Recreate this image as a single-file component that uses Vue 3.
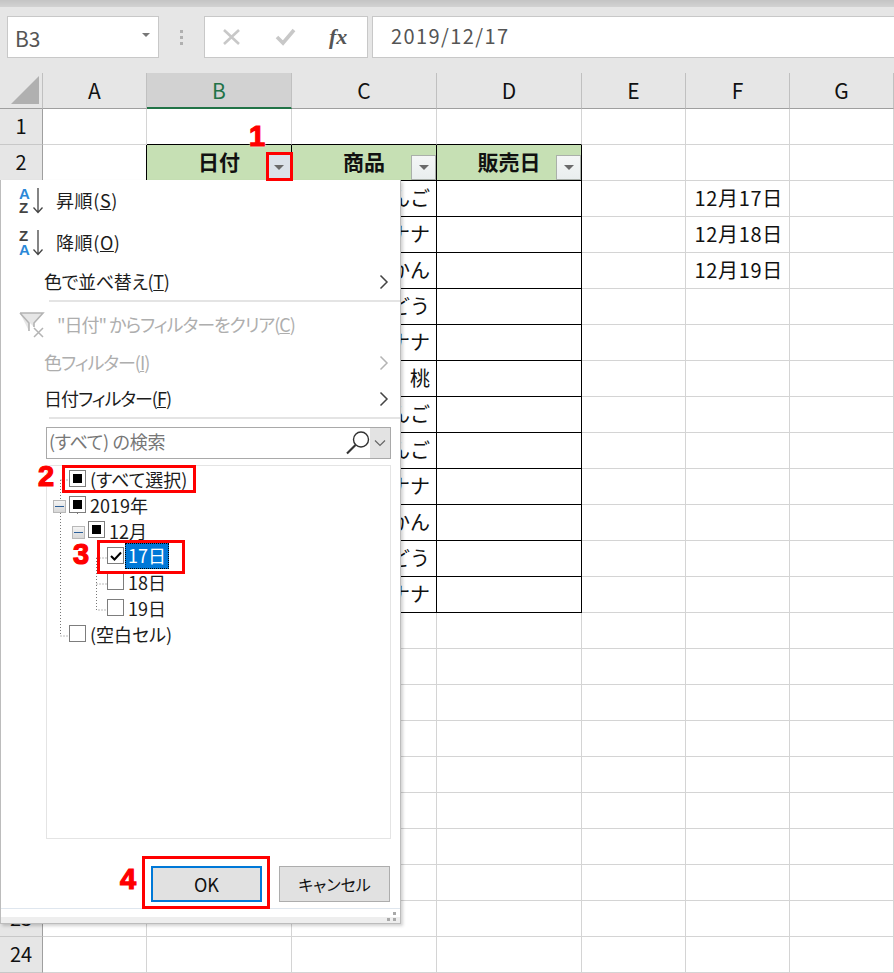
<script setup>
const columns = ['A', 'B', 'C', 'D', 'E', 'F', 'G']
const rows = Array.from({ length: 24 }, (_, i) => i + 1)
const goods = ['りんご', 'バナナ', 'みかん', 'ぶどう', 'バナナ', '桃', 'りんご', 'りんご', 'バナナ', 'みかん', 'ぶどう', 'バナナ']
const heads = { B: '日付', C: '商品', D: '販売日' }
const dates = { 3: '12月17日', 4: '12月18日', 5: '12月19日' }
const inTable = (r, c) => r >= 2 && r <= 14 && 'BCD'.includes(c)
function cellClass(r, c) {
  return {
    black: inTable(r, c),
    'black-r': c === 'A' && r >= 2 && r <= 14,
    'black-b': r === 1 && 'BCD'.includes(c),
    head: r === 2 && 'BCD'.includes(c),
    date: c === 'F',
  }
}
function cellText(r, c) {
  if (c === 'C' && r >= 3 && r <= 14) return goods[r - 3]
  if (c === 'F') return dates[r] || ''
  return ''
}
const tree = [
  { label: '(すべて選択)', level: 0, state: 'mixed' },
  { label: '2019年', level: 0, state: 'mixed', toggle: true },
  { label: '12月', level: 1, state: 'mixed', toggle: true },
  { label: '17日', level: 2, state: 'checked', selected: true },
  { label: '18日', level: 2, state: '' },
  { label: '19日', level: 2, state: '' },
  { label: '(空白セル)', level: 0, state: '' },
]
</script>

<template>
  <div class="app">
    <div class="topbar"></div>
    <div class="formula">
      <div class="namebox"><span>B3</span><i class="tri"></i></div>
      <div class="grip-v"><b></b><b></b><b></b></div>
      <div class="fxbox">
        <svg width="19" height="18" viewBox="0 0 19 18"><path d="M2 2 17 16M17 2 2 16" stroke="#c8c8c8" stroke-width="2.6" fill="none" /></svg>
        <svg width="21" height="18" viewBox="0 0 21 18"><path d="M2 9 8 15 19 2" stroke="#c8c8c8" stroke-width="3.6" fill="none" /></svg>
        <span class="fx">fx</span>
      </div>
      <div class="fbar"><span>2019/12/17</span></div>
    </div>

    <div class="sheet">
      <div class="corner"><i></i></div>
      <div v-for="c in columns" :key="c" class="colhead" :class="{ active: c === 'B' }">{{ c }}</div>
      <template v-for="r in rows" :key="r">
        <div class="rowhead">{{ r }}</div>
        <div v-for="c in columns" :key="c" class="cell" :class="cellClass(r, c)">
          <template v-if="r === 2 && heads[c]">
            <span class="headtxt">{{ heads[c] }}</span>
            <span class="fbtn" :class="{ hot: c === 'B' }"><i></i></span>
          </template>
          <template v-else>{{ cellText(r, c) }}</template>
        </div>
      </template>
    </div>

    <div class="popup">
      <div class="item sort">
        <svg class="sorticon" width="26" height="28" viewBox="0 0 26 28">
          <text x="1" y="12" class="ic blue">A</text><text x="1" y="26" class="ic dark">Z</text>
          <path d="M20 1V25M15.500 20.500 20 25.500 24.500 20.500" stroke="#444" stroke-width="1.300" fill="none" />
        </svg>
        <span class="txt wide">昇順(<u>S</u>)</span>
      </div>
      <div class="item sort">
        <svg class="sorticon" width="26" height="28" viewBox="0 0 26 28">
          <text x="1" y="12" class="ic dark">Z</text><text x="1" y="26" class="ic blue">A</text>
          <path d="M20 1V25M15.500 20.500 20 25.500 24.500 20.500" stroke="#444" stroke-width="1.300" fill="none" />
        </svg>
        <span class="txt wide">降順(<u>O</u>)</span>
      </div>
      <div class="item plain">
        <span class="txt snug">色で並べ替え(<u>T</u>)</span>
        <svg class="chev" width="10" height="16" viewBox="0 0 10 16"><path d="M1.500 1.500 8 8 1.500 14.500" stroke="#444" stroke-width="1.500" fill="none" /></svg>
      </div>
      <div class="sep"></div>
      <div class="item clear off">
        <svg class="funnel" width="26" height="26" viewBox="0 0 26 26">
          <path d="M1 1H24L15 11V15M10 19V11L1 1" stroke="#b4b4b4" stroke-width="1.600" fill="#e6e6e6" />
          <path d="M15 16 24 25M24 16 15 25" stroke="#b4b4b4" stroke-width="1.500" />
        </svg>
        <span class="txt tight">"日付" からフィルターをクリア(<u>C</u>)</span>
      </div>
      <div class="item plain off">
        <span class="txt tight">色フィルター(<u>I</u>)</span>
        <svg class="chev" width="10" height="16" viewBox="0 0 10 16"><path d="M1.500 1.500 8 8 1.500 14.500" stroke="#b4b4b4" stroke-width="1.500" fill="none" /></svg>
      </div>
      <div class="item plain">
        <span class="txt tight">日付フィルター(<u>F</u>)</span>
        <svg class="chev" width="10" height="16" viewBox="0 0 10 16"><path d="M1.500 1.500 8 8 1.500 14.500" stroke="#444" stroke-width="1.500" fill="none" /></svg>
      </div>
      <div class="sep"></div>

      <div class="search">
        <span class="ph">(すべて) の検索</span>
        <svg class="lens" width="26" height="26" viewBox="0 0 26 26">
          <circle cx="16" cy="9.500" r="7.500" stroke="#333" stroke-width="1.400" fill="none" />
          <path d="M10.500 15 2 23.500" stroke="#333" stroke-width="2.200" />
        </svg>
        <span class="drop">
          <svg width="12" height="8" viewBox="0 0 12 8"><path d="M1 1.500 6 6.500 11 1.500" stroke="#666" stroke-width="1.200" fill="none" /></svg>
        </span>
      </div>

      <div class="tree">
        <svg class="lines" width="140" height="190" viewBox="0 0 140 190">
          <path d="M13.500 14V170H24M13.500 14H24M30.500 38V50M49.500 92V144H60M49.500 92H60M49.500 118H60" stroke="#777" stroke-dasharray="1 2" fill="none" />
        </svg>
        <div v-for="n in tree" :key="n.label" class="node" :class="'lv' + n.level">
          <span v-if="n.toggle" class="toggle"><i></i></span>
          <span class="box" :class="n.state">
            <svg v-if="n.state === 'checked'" width="12" height="10" viewBox="0 0 12 10"><path d="M1 5 4.500 8.500 11 1.500" stroke="#000" stroke-width="2" fill="none" /></svg>
          </span>
          <span class="lab" :class="{ sel: n.selected }">{{ n.label }}</span>
        </div>
      </div>

      <div class="actions">
        <button class="btn primary">OK</button>
        <button class="btn">キャンセル</button>
      </div>
      <div class="foot">
        <div class="gripdots"><b></b><b></b><b></b></div>
      </div>
    </div>

    <div class="mark m1"></div>
    <div class="mark m2"></div>
    <div class="mark m3"></div>
    <div class="mark m4"></div>
    <span class="num n1">1</span>
    <span class="num n2">2</span>
    <span class="num n3">3</span>
    <span class="num n4">4</span>
  </div>
</template>

<style scoped>
.app {
  position: relative;
  width: 894px;
  height: 973px;
  overflow: hidden;
  background: #fff;
  font-family: "Noto Sans CJK JP", "Noto Sans", sans-serif;
  font-feature-settings: "palt";
  color: #111;
}
.topbar { height: 7px; background: linear-gradient(#c4c4c4, #d2d2d2); }
.formula {
  height: 66px;
  background: #e6e6e6;
  display: flex;
  align-items: flex-start;
  padding: 9px 0 0 7px;
  box-sizing: border-box;
}
.namebox, .fxbox, .fbar {
  height: 42px;
  box-sizing: border-box;
  background: #fff;
  border: 1px solid #c8c8c8;
  display: flex;
  align-items: center;
}
.namebox {
  width: 152px;
  padding: 2px 8px 0 7px;
  justify-content: space-between;
  font-size: 21px;
  color: #555;
}
.tri { width: 0; height: 0; border: 4px solid transparent; border-top: 4px solid #777; margin-top: -2px; }
.grip-v { width: 45px; height: 42px; display: flex; flex-direction: column; align-items: center; justify-content: center; gap: 3px; }
.grip-v b { width: 3px; height: 3px; background: #b0b0b0; }
.fxbox { width: 164px; padding-left: 17px; gap: 34px; }
.fx { font: italic bold 22px "Liberation Serif", serif; color: #555; margin-left: -1px; }
.fbar {
  margin-left: 4px;
  flex: 1;
  border-right: 0;
  padding: 0 0 3px 18px;
  font-size: 20px;
  letter-spacing: 1.400px;
  color: #555;
}
.sheet {
  display: grid;
  grid-template-columns: 43px 104px 145px 145px 145px 104px 104px 104px;
  grid-template-rows: 36px repeat(24, 36px);
}
.corner, .colhead, .rowhead { background: #e6e6e6; box-sizing: border-box; }
.corner { border-bottom: 1px solid #9f9f9f; border-right: 1px solid #c0c0c0; position: relative; }
.corner i {
  position: absolute;
  right: 3px;
  bottom: 4px;
  width: 28px;
  height: 28px;
  background: #b0b0b0;
  clip-path: polygon(100% 0, 100% 100%, 0 100%);
}
.colhead {
  border-bottom: 1px solid #9f9f9f;
  border-right: 1px solid #c0c0c0;
  text-align: center;
  font-size: 21px;
  line-height: 34px;
}
.colhead.active { background: #d2d2d2; border-bottom: 2px solid #217346; color: #217346; }
.rowhead {
  border-right: 1px solid #9f9f9f;
  border-bottom: 1px solid #c8c8c8;
  text-align: center;
  font-size: 20px;
  line-height: 34px;
}
.cell {
  position: relative;
  box-sizing: border-box;
  border-right: 1px solid #d4d4d4;
  border-bottom: 1px solid #d4d4d4;
  text-align: right;
  padding-right: 6px;
  font-size: 20px;
  line-height: 33px;
  font-feature-settings: normal;
}
.date { letter-spacing: 0.700px; }
.black { border-right-color: #000; border-bottom-color: #000; }
.black-r { border-right-color: #000; }
.black-b { border-bottom-color: #000; }
.head { background: #c6e0b4; padding-right: 0; text-align: center; }
.headtxt { font-weight: 700; font-size: 21px; }
.fbtn {
  position: absolute;
  right: 0;
  bottom: 0;
  width: 25px;
  height: 25px;
  box-sizing: border-box;
  background: linear-gradient(#f4f6f6, #e9eeee);
  border: 1px solid #aab0aa;
  display: flex;
  align-items: center;
  justify-content: center;
}
.fbtn.hot { background: #dbe2ea; border-color: transparent; }
.fbtn i { width: 0; height: 0; border: 5px solid transparent; border-top: 5px solid #6a6a6a; border-bottom: 0; }

.popup {
  position: absolute;
  left: 0;
  top: 180px;
  width: 401px;
  height: 744px;
  box-sizing: border-box;
  background: #fff;
  border: 1px solid #bcbcbc;
  border-top: 0;
  box-shadow: 2px 2px 3px rgba(0, 0, 0, 0.18);
  display: flex;
  flex-direction: column;
  font-size: 18px;
  color: #1c1c1c;
}
.item { display: flex; align-items: center; flex: none; }
.txt { position: relative; top: -1px; }
.wide { letter-spacing: 0.600px; }
.snug { letter-spacing: -0.300px; }
.tight { letter-spacing: -1px; }
.sort { height: 42px; padding-left: 17px; gap: 12px; }
.sorticon { overflow: visible; }
.plain { height: 36px; padding: 0 11px 0 43px; justify-content: space-between; }
.clear { height: 40px; margin-top: 3px; padding-left: 18px; gap: 12px; }
.off { color: #aeaeae; }
.sep { height: 2px; margin-left: 48px; background: #e4e4e4; flex: none; }
.ic { font: 700 15px "Liberation Sans", sans-serif; }
.blue { fill: #2b88d8; }
.dark { fill: #444; }
.search {
  margin: 8px 9px 0 45px;
  height: 32px;
  flex: none;
  box-sizing: border-box;
  border: 1px solid #a9a9a9;
  display: flex;
  align-items: center;
  padding-left: 2px;
}
.ph { flex: 1; color: #777; position: relative; top: -2px; letter-spacing: -0.300px; }
.lens { margin-right: -1px; }
.drop { width: 20px; height: 30px; background: #e3e3e3; display: flex; align-items: center; justify-content: center; }
.tree {
  position: relative;
  margin: 6px 9px 0 45px;
  height: 374px;
  flex: none;
  box-sizing: border-box;
  border: 1px solid #e4e4e4;
  padding-top: 1px;
}
.lines { position: absolute; left: 0; top: 0; }
.node { position: relative; height: 25.800px; display: flex; align-items: center; }
.lv0 { padding-left: 22px; }
.lv1 { padding-left: 41px; }
.lv2 { padding-left: 60px; }
.toggle {
  position: absolute;
  top: 7px;
  width: 13px;
  height: 13px;
  box-sizing: border-box;
  border: 1px solid #b8b8b8;
  background: linear-gradient(#f4f4f4, #d8d8d8);
  display: flex;
  align-items: center;
  justify-content: center;
}
.lv0 .toggle { left: 6px; }
.lv1 .toggle { left: 25px; }
.toggle i { width: 9px; height: 1px; background: #2b5f99; }
.box {
  width: 17px;
  height: 17px;
  flex: none;
  box-sizing: border-box;
  border: 1px solid #7d7d7d;
  background: #fff;
  display: flex;
  align-items: center;
  justify-content: center;
  margin-top: -3px;
}
.box.mixed::after { content: ""; width: 9px; height: 9px; background: #000; }
.lab { margin-left: 4px; white-space: nowrap; position: relative; top: -1px; }
.lab.sel {
  margin-left: 1px;
  padding: 0 3px;
  height: 26px;
  line-height: 25px;
  box-sizing: border-box;
  color: #fff;
  background: #0078d7;
  outline: 1px dotted #000;
  outline-offset: -1px;
}
.actions { flex: none; display: flex; justify-content: flex-end; gap: 17px; padding: 27px 10px 0 0; }
.btn {
  width: 111px;
  height: 36px;
  box-sizing: border-box;
  border: 1px solid #adadad;
  background: #e1e1e1;
  font: inherit;
  font-size: 16px;
  color: #111;
  padding: 0;
}
.primary { border: 2px solid #0078d7; font-size: 18px; }
.foot {
  flex: 1;
  margin-top: 6px;
  border-top: 1px solid #dfe6ee;
  background: linear-gradient(#fff 55%, #eeeeee 55%);
  position: relative;
}
.gripdots { position: absolute; right: 4px; bottom: 2px; width: 9px; height: 9px; }
.gripdots b { position: absolute; width: 3px; height: 3px; background: #a9a9a9; }
.gripdots b:nth-child(1) { right: 0; top: 0; }
.gripdots b:nth-child(2) { right: 0; bottom: 0; }
.gripdots b:nth-child(3) { left: 0; bottom: 0; }

.mark { position: absolute; box-sizing: border-box; border: 3px solid #f00; }
.m1 { left: 266px; top: 152px; width: 27px; height: 29px; }
.m2 { left: 62px; top: 465px; width: 134px; height: 28px; }
.m3 { left: 97px; top: 540px; width: 88px; height: 34px; }
.m4 { left: 142px; top: 856px; width: 128px; height: 53px; }
.num {
  position: absolute;
  font: 700 29px/30px "Liberation Sans", sans-serif;
  color: #f00;
  -webkit-text-stroke: 1.200px #f00;
  text-shadow: 0 0 2px #fff, 0 0 2px #fff, 0 0 2px #fff;
}
.n1 { left: 249px; top: 121px; }
.n2 { left: 38px; top: 461px; }
.n3 { left: 73px; top: 539px; }
.n4 { left: 120px; top: 864px; }
</style>
